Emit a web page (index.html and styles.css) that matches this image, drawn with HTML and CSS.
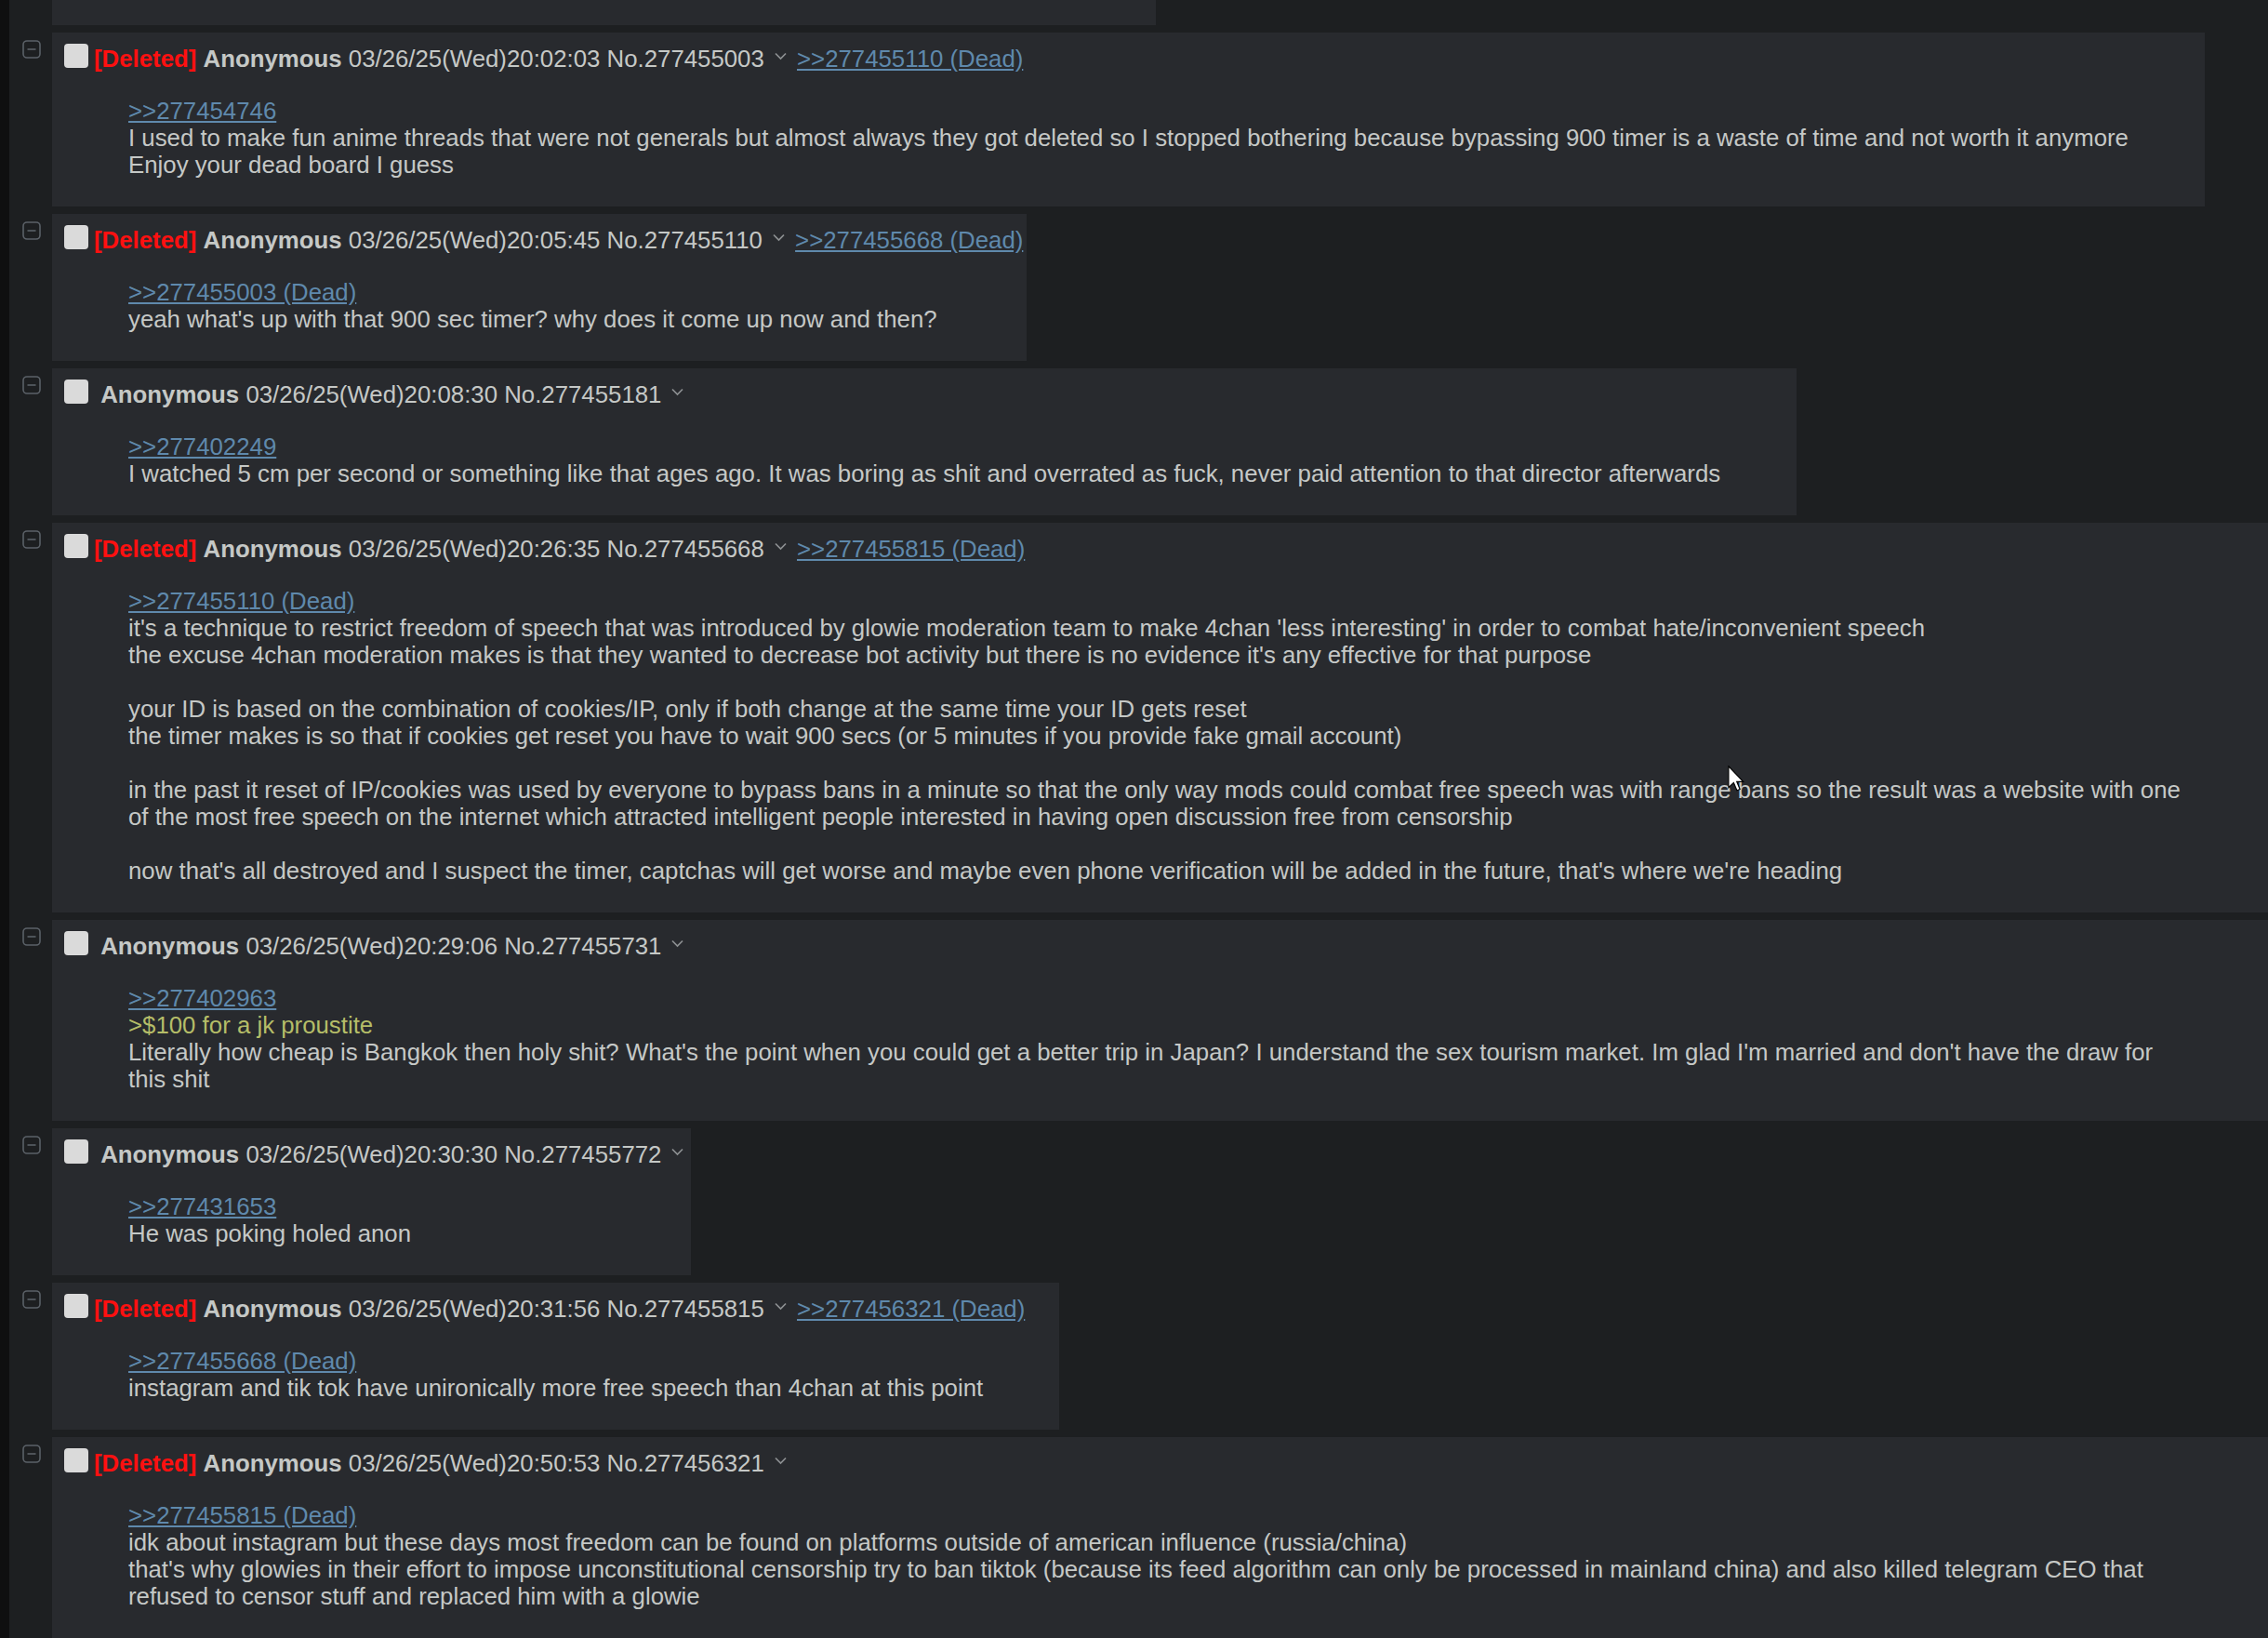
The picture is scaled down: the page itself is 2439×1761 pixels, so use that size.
FILE: index.html
```html
<!DOCTYPE html>
<html>
<head>
<meta charset="utf-8">
<title>Thread</title>
<link rel="stylesheet" href="styles.css">
</head>
<body>
<div class="page">
  <div class="strip"></div>
  <div class="thread">

    <div class="row">
      <div class="side"></div>
      <div class="post stub"></div>
    </div>

    <div class="row">
      <div class="side"><svg class="hide" viewBox="0 0 20 20"><rect x="1" y="1" width="18" height="18" rx="4"/><line x1="5.5" y1="10" x2="14.5" y2="10"/></svg></div>
      <div class="post">
        <div class="info"><span class="cb"></span><span class="del">[Deleted]</span> <span class="name">Anonymous</span> <span>03/26/25(Wed)20:02:03</span> <span>No.277455003</span><svg class="menu" viewBox="0 0 13 9"><polyline points="1,1.5 6.5,7 12,1.5"/></svg> <a class="ql">&gt;&gt;277455110 (Dead)</a></div>
        <blockquote class="msg"><a class="ql">&gt;&gt;277454746</a><br>I used to make fun anime threads that were not generals but almost always they got deleted so I stopped bothering because bypassing 900 timer is a waste of time and not worth it anymore<br>Enjoy your dead board I guess</blockquote>
      </div>
    </div>

    <div class="row">
      <div class="side"><svg class="hide" viewBox="0 0 20 20"><rect x="1" y="1" width="18" height="18" rx="4"/><line x1="5.5" y1="10" x2="14.5" y2="10"/></svg></div>
      <div class="post">
        <div class="info"><span class="cb"></span><span class="del">[Deleted]</span> <span class="name">Anonymous</span> <span>03/26/25(Wed)20:05:45</span> <span>No.277455110</span><svg class="menu" viewBox="0 0 13 9"><polyline points="1,1.5 6.5,7 12,1.5"/></svg> <a class="ql">&gt;&gt;277455668 (Dead)</a></div>
        <blockquote class="msg"><a class="ql">&gt;&gt;277455003 (Dead)</a><br>yeah what's up with that 900 sec timer? why does it come up now and then?</blockquote>
      </div>
    </div>

    <div class="row">
      <div class="side"><svg class="hide" viewBox="0 0 20 20"><rect x="1" y="1" width="18" height="18" rx="4"/><line x1="5.5" y1="10" x2="14.5" y2="10"/></svg></div>
      <div class="post">
        <div class="info"><span class="cb"></span> <span class="name">Anonymous</span> <span>03/26/25(Wed)20:08:30</span> <span>No.277455181</span><svg class="menu" viewBox="0 0 13 9"><polyline points="1,1.5 6.5,7 12,1.5"/></svg></div>
        <blockquote class="msg"><a class="ql">&gt;&gt;277402249</a><br>I watched 5 cm per second or something like that ages ago. It was boring as shit and overrated as fuck, never paid attention to that director afterwards</blockquote>
      </div>
    </div>

    <div class="row">
      <div class="side"><svg class="hide" viewBox="0 0 20 20"><rect x="1" y="1" width="18" height="18" rx="4"/><line x1="5.5" y1="10" x2="14.5" y2="10"/></svg></div>
      <div class="post">
        <div class="info"><span class="cb"></span><span class="del">[Deleted]</span> <span class="name">Anonymous</span> <span>03/26/25(Wed)20:26:35</span> <span>No.277455668</span><svg class="menu" viewBox="0 0 13 9"><polyline points="1,1.5 6.5,7 12,1.5"/></svg> <a class="ql">&gt;&gt;277455815 (Dead)</a></div>
        <blockquote class="msg"><a class="ql">&gt;&gt;277455110 (Dead)</a><br>it's a technique to restrict freedom of speech that was introduced by glowie moderation team to make 4chan 'less interesting' in order to combat hate/inconvenient speech<br>the excuse 4chan moderation makes is that they wanted to decrease bot activity but there is no evidence it's any effective for that purpose<br><br>your ID is based on the combination of cookies/IP, only if both change at the same time your ID gets reset<br>the timer makes is so that if cookies get reset you have to wait 900 secs (or 5 minutes if you provide fake gmail account)<br><br>in the past it reset of IP/cookies was used by everyone to bypass bans in a minute so that the only way mods could combat free speech was with range bans so the result was a website with one of the most free speech on the internet which attracted intelligent people interested in having open discussion free from censorship<br><br>now that's all destroyed and I suspect the timer, captchas will get worse and maybe even phone verification will be added in the future, that's where we're heading</blockquote>
      </div>
    </div>

    <div class="row">
      <div class="side"><svg class="hide" viewBox="0 0 20 20"><rect x="1" y="1" width="18" height="18" rx="4"/><line x1="5.5" y1="10" x2="14.5" y2="10"/></svg></div>
      <div class="post">
        <div class="info"><span class="cb"></span> <span class="name">Anonymous</span> <span>03/26/25(Wed)20:29:06</span> <span>No.277455731</span><svg class="menu" viewBox="0 0 13 9"><polyline points="1,1.5 6.5,7 12,1.5"/></svg></div>
        <blockquote class="msg"><a class="ql">&gt;&gt;277402963</a><br><span class="green">&gt;$100 for a jk proustite</span><br>Literally how cheap is Bangkok then holy shit? What's the point when you could get a better trip in Japan? I understand the sex tourism market. Im glad I'm married and don't have the draw for this shit</blockquote>
      </div>
    </div>

    <div class="row">
      <div class="side"><svg class="hide" viewBox="0 0 20 20"><rect x="1" y="1" width="18" height="18" rx="4"/><line x1="5.5" y1="10" x2="14.5" y2="10"/></svg></div>
      <div class="post">
        <div class="info"><span class="cb"></span> <span class="name">Anonymous</span> <span>03/26/25(Wed)20:30:30</span> <span>No.277455772</span><svg class="menu" viewBox="0 0 13 9"><polyline points="1,1.5 6.5,7 12,1.5"/></svg></div>
        <blockquote class="msg"><a class="ql">&gt;&gt;277431653</a><br>He was poking holed anon</blockquote>
      </div>
    </div>

    <div class="row">
      <div class="side"><svg class="hide" viewBox="0 0 20 20"><rect x="1" y="1" width="18" height="18" rx="4"/><line x1="5.5" y1="10" x2="14.5" y2="10"/></svg></div>
      <div class="post">
        <div class="info"><span class="cb"></span><span class="del">[Deleted]</span> <span class="name">Anonymous</span> <span>03/26/25(Wed)20:31:56</span> <span>No.277455815</span><svg class="menu" viewBox="0 0 13 9"><polyline points="1,1.5 6.5,7 12,1.5"/></svg> <a class="ql">&gt;&gt;277456321 (Dead)</a></div>
        <blockquote class="msg"><a class="ql">&gt;&gt;277455668 (Dead)</a><br>instagram and tik tok have unironically more free speech than 4chan at this point</blockquote>
      </div>
    </div>

    <div class="row">
      <div class="side"><svg class="hide" viewBox="0 0 20 20"><rect x="1" y="1" width="18" height="18" rx="4"/><line x1="5.5" y1="10" x2="14.5" y2="10"/></svg></div>
      <div class="post">
        <div class="info"><span class="cb"></span><span class="del">[Deleted]</span> <span class="name">Anonymous</span> <span>03/26/25(Wed)20:50:53</span> <span>No.277456321</span><svg class="menu" viewBox="0 0 13 9"><polyline points="1,1.5 6.5,7 12,1.5"/></svg></div>
        <blockquote class="msg"><a class="ql">&gt;&gt;277455815 (Dead)</a><br>idk about instagram but these days most freedom can be found on platforms outside of american influence (russia/china)<br>that's why glowies in their effort to impose unconstitutional censorship try to ban tiktok (because its feed algorithm can only be processed in mainland china) and also killed telegram CEO that refused to censor stuff and replaced him with a glowie</blockquote>
      </div>
    </div>

  </div>
</div>
<svg class="cursor" viewBox="0 0 12 19"><path d="M0.5,0.5 L0.5,16 L4.2,12.6 L6.6,18.2 L8.8,17.3 L6.5,11.8 L11.2,11.8 Z"/></svg>
</body>
</html>
```

FILE: styles.css
```css
html, body {
  margin: 0;
  padding: 0;
  background: #1d1f21;
  overflow: hidden;
}

body {
  position: relative;
  font-family: "Liberation Sans", Arial, sans-serif;
  font-size: 25.8px;
  line-height: 29px;
  color: #c5c8c6;
}

.page {
  display: flex;
  align-items: stretch;
  min-height: 1761px;
}

.strip {
  width: 10px;
  flex: 0 0 10px;
  background: #0f0f10;
}

.thread {
  flex: 1 1 auto;
  min-width: 0;
}

.row {
  display: flex;
  align-items: flex-start;
  margin-bottom: 8px;
}

.side {
  flex: 0 0 46px;
  width: 46px;
  box-sizing: border-box;
  padding: 8px 0 0 14px;
}

.hide {
  display: block;
  width: 20px;
  height: 20px;
  fill: none;
  stroke: #5b6168;
  stroke-width: 1.6;
}

.post {
  flex: 0 1 auto;
  min-width: 0;
  background: #282a2e;
  padding: 4px;
}

.stub {
  width: 1187px;
  height: 27px;
  padding: 0;
}

.info {
  height: 40px;
  box-sizing: border-box;
  padding-top: 8px;
  white-space: nowrap;
}

.cb {
  display: inline-block;
  width: 26px;
  height: 26px;
  background: #dadada;
  border-radius: 4px;
  margin: 0 6px 0 9px;
  vertical-align: -1px;
}

.del {
  color: #ff1010;
  font-weight: bold;
}

.name {
  font-weight: bold;
  color: #c5c8c6;
}

.menu {
  display: inline-block;
  width: 13px;
  height: 9px;
  margin: 0 4px 0 11px;
  vertical-align: 7px;
  fill: none;
  stroke: #8d9092;
  stroke-width: 1.7;
}

.ql {
  color: #5f89ac;
  text-decoration: underline;
}

.msg {
  margin: 26px 78px 26px 78px;
}

.green {
  color: #b5bd68;
}

.cursor {
  position: absolute;
  left: 1858px;
  top: 823px;
  width: 18px;
  height: 28px;
  fill: #ffffff;
  stroke: #000000;
  stroke-width: 0.8;
}
```
